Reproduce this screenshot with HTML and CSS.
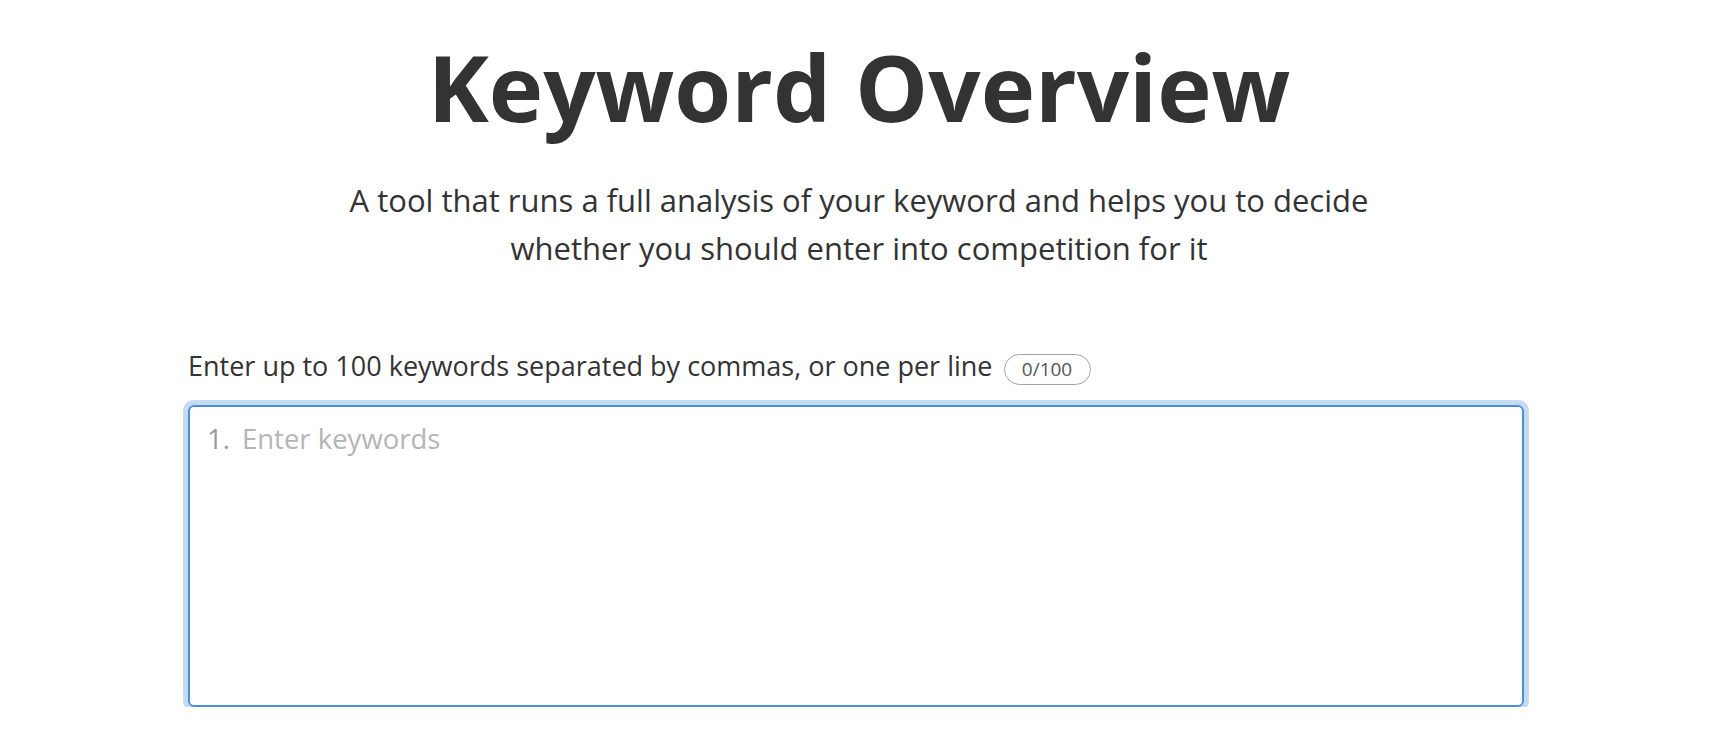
FILE: index.html
```html
<!DOCTYPE html>
<html lang="en">
<head>
<meta charset="utf-8">
<title>Keyword Overview</title>
<link rel="stylesheet" href="styles.css">
</head>
<body>
<main class="page">
  <header class="hero">
    <h1 class="title">Keyword Overview</h1>
    <p class="subtitle">A tool that runs a full analysis of your keyword and helps you to decide<br>whether you should enter into competition for it</p>
  </header>
  <section class="form">
    <div class="label-row">
      <label class="label" for="kw">Enter up to 100 keywords separated by commas, or one per line</label>
      <span class="counter">0/100</span>
    </div>
    <div class="field">
      <span class="line-no">1.</span>
      <span class="placeholder">Enter keywords</span>
    </div>
  </section>
</main>
</body>
</html>
```

FILE: styles.css
```css
html, body {
  margin: 0;
  padding: 0;
  background: #ffffff;
}

body {
  font-family: "Open Sans", "Noto Sans", sans-serif;
  color: #333333;
}

.page {
  width: 1342px;
  margin: 0 auto;
  padding-top: 32px;
}

.hero {
  display: flex;
  flex-direction: column;
  align-items: center;
  text-align: center;
}

.title {
  margin: 0;
  font-size: 92px;
  font-weight: 700;
  line-height: 110px;
  color: #333333;
}

.subtitle {
  margin: 34px 0 0;
  font-size: 31px;
  line-height: 48px;
  color: #333333;
}

.form {
  margin-top: 78px;
  padding-right: 6px;
  display: flex;
  flex-direction: column;
  gap: 20px;
}

.label-row {
  display: flex;
  align-items: baseline;
  gap: 11px;
}

.label {
  font-size: 27px;
  line-height: 32px;
  color: #333333;
}

.counter {
  box-sizing: border-box;
  display: inline-flex;
  align-items: center;
  justify-content: center;
  width: 87px;
  height: 31px;
  border: 1.5px solid #a3a3a3;
  border-radius: 16px;
  font-size: 19px;
  color: #555555;
}

.field {
  box-sizing: border-box;
  height: 302px;
  border: 2px solid #4a90d9;
  border-radius: 6px;
  box-shadow: 0 0 0 5px #c4dbf1;
  padding: 15px 17px;
  display: flex;
  align-items: baseline;
  gap: 12px;
  font-size: 27.5px;
  line-height: 34px;
}

.line-no {
  color: #9b9b9b;
}

.placeholder {
  color: #b5b5b5;
}
```
